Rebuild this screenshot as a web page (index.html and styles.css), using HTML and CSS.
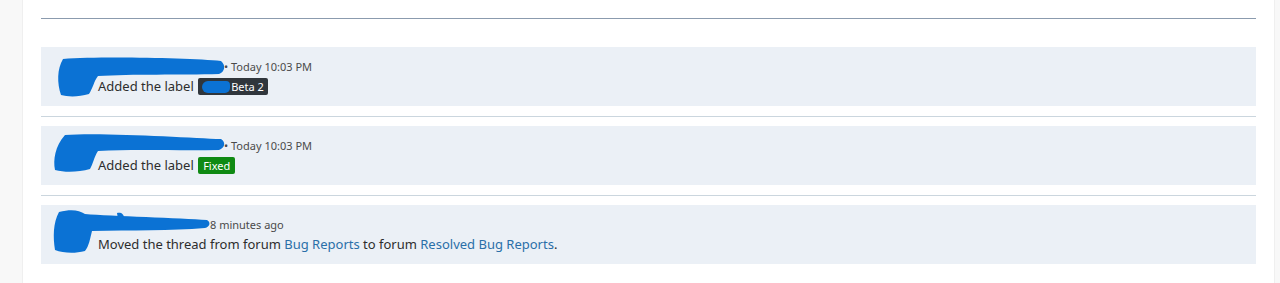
FILE: index.html
```html
<!DOCTYPE html>
<html lang="en">
<head>
    <title>Thread history</title>
    <link rel="stylesheet" href="styles.css">
</head>
<body>
    <div class="page">
        <div class="gutter-left"></div>

        <div class="main">
            <hr class="top-rule">

            <div class="entry">
                <svg class="scribble" width="220" height="59" viewBox="0 0 220 59">
                    <path d="M22 12 C60 9, 150 11, 180 14 C185 18, 184 25, 178 27 C140 28, 90 27, 57 29 C53 34, 52 41, 48 47 C38 50, 27 50, 20 48 C16 36, 16 22, 22 12 Z"/>
                </svg>
                <div class="entry-body">
                    <div class="meta">
                        <span class="user user-long"></span><span class="time">&bull; Today 10:03 PM</span>
                    </div>
                    <div class="message">
                        Added the label <span class="label label-dark"><span class="redact-word"></span>Beta 2</span>
                    </div>
                </div>
            </div>

            <hr class="sep">

            <div class="entry">
                <svg class="scribble" width="220" height="59" viewBox="0 0 220 59">
                    <path d="M24 9 C60 6, 150 12, 180 13 C185 16, 184 22, 178 24 C140 25, 95 23, 57 25 C53 31, 52 38, 49 43 C38 46, 25 47, 14 44 C12 34, 14 20, 24 9 Z"/>
                </svg>
                <div class="entry-body">
                    <div class="meta">
                        <span class="user user-long"></span><span class="time">&bull; Today 10:03 PM</span>
                    </div>
                    <div class="message">
                        Added the label <span class="label label-green">Fixed</span>
                    </div>
                </div>
            </div>

            <hr class="sep">

            <div class="entry">
                <svg class="scribble" width="220" height="59" viewBox="0 0 220 59">
                    <path d="M18 7 C30 4, 38 5, 44 9 C70 11, 140 13, 166 15 C170 17, 169 22, 164 23 C130 26, 90 25, 51 26 C49 34, 48 41, 44 46 C33 49, 22 48, 14 45 C12 32, 12 18, 18 7 Z"/>
                    <path d="M76 8 C80 7, 83 9, 83 13 L77 14 Z"/>
                </svg>
                <div class="entry-body">
                    <div class="meta">
                        <span class="user user-short"></span><span class="time">8 minutes ago</span>
                    </div>
                    <div class="message">
                        Moved the thread from forum <a href="#">Bug Reports</a> to forum <a href="#">Resolved Bug Reports</a>.
                    </div>
                </div>
            </div>
        </div>

        <div class="gutter-right"></div>
    </div>
</body>
</html>
```

FILE: styles.css
```css
body {
    margin: 0;
    padding: 0;
    font-family: "Noto Sans", "Open Sans", Arial, sans-serif;
    background-color: #fff;
    color: #2d2d2d;
}

.page {
    display: flex;
    height: 283px;
}

.gutter-left {
    width: 22px;
    background-color: #f8f8f8;
    border-right: 1px solid #efefef;
}

.gutter-right {
    width: 5px;
    background-color: #f8f8f8;
    border-left: 1px solid #efefef;
}

.main {
    flex: 1;
    padding: 18px 18px 0 18px;
}

.top-rule {
    margin: 0 0 28px 0;
    border: none;
    border-top: 1px solid #8b9bae;
}

.sep {
    margin: 10px 0 9px 0;
    border: none;
    border-top: 1px solid #cbd6de;
}

.entry {
    position: relative;
    background-color: #ebf0f6;
    height: 59px;
    box-sizing: border-box;
    padding: 12px 0 0 57px;
}

.scribble {
    position: absolute;
    left: 0;
    top: 0;
}

.scribble path {
    fill: #0b72d4;
}

.meta {
    height: 15px;
    line-height: 15px;
    font-size: 11px;
    color: #4a4a4a;
    display: flex;
}

.user {
    display: inline-block;
}

.user-long {
    width: 126px;
}

.user-short {
    width: 112px;
}

.time {
    white-space: pre;
}

.message {
    height: 20px;
    line-height: 20px;
    font-size: 13px;
    margin-top: 2px;
    white-space: nowrap;
}

.message a {
    color: #2a6fa8;
    text-decoration: none;
}

.label {
    display: inline-block;
    height: 17px;
    line-height: 17px;
    padding: 0 5px;
    border-radius: 2px;
    font-size: 11px;
    color: #fff;
    white-space: nowrap;
    margin-left: 1px;
}

.label-dark {
    background-color: #30363c;
    padding: 0 4px;
}

.label-green {
    background-color: #0f8a13;
}

.redact-word {
    display: inline-block;
    width: 28px;
    height: 12px;
    margin-right: 1px;
    vertical-align: -2px;
    border-radius: 6px 4px 5px 6px;
    background-color: #0b72d4;
}
```
